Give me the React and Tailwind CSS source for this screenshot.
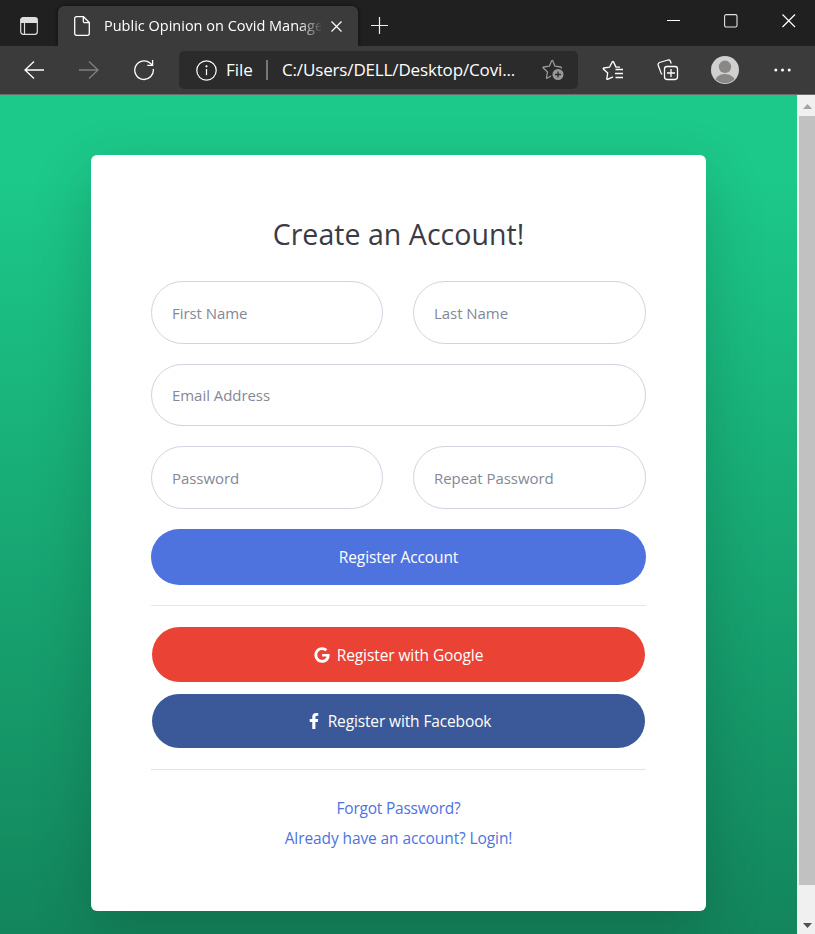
import React from "react";
import { FaGoogle, FaFacebookF } from "react-icons/fa";

const UI = "font-['Segoe_UI','Open_Sans','Noto_Sans',sans-serif]";

function Field({ placeholder, className }) {
  return (
    <input
      placeholder={placeholder}
      className={`block min-w-0 rounded-full border border-[#d1d3e2] bg-white px-5 text-[15px] tracking-[-0.05px] text-[#6e707e] outline-none placeholder:text-[#858796] ${className}`}
    />
  );
}

function TitleBar() {
  return (
    <div className="flex h-[46px] bg-[#202020]">
      <div className="flex w-[58px] items-center justify-center pt-[6px]">
        <svg width="18" height="18" viewBox="0 0 18 18" fill="none" stroke="#dedede" strokeWidth="1.2">
          <rect x="0.7" y="0.7" width="16.6" height="16.6" rx="2.6" />
          <path d="M1 3A2 2 0 0 1 3 1h12a2 2 0 0 1 2 2v2.4H1z" fill="#dedede" />
          <path d="M4.5 5v12" />
        </svg>
      </div>
      <div className="mt-[6px] flex h-10 w-[300px] items-center rounded-t-[6px] bg-[#3b3b3b] pl-4 shadow-[0_0_4px_rgba(0,0,0,0.6)] [clip-path:inset(-6px_-6px_0_-6px)]">
        <svg width="16" height="20" viewBox="0 0 16 20" fill="none" stroke="#fff" strokeWidth="1.3">
          <path d="M2.5.7h7L15.3 6.5v11a1.8 1.8 0 0 1-1.8 1.8h-11a1.8 1.8 0 0 1-1.8-1.8v-15A1.8 1.8 0 0 1 2.5.7z" />
          <path d="M9.3.9v4.3a1.5 1.5 0 0 0 1.5 1.5h4.3" />
        </svg>
        <div className="ml-[14px] w-[217px] whitespace-nowrap text-[14.5px] leading-5 text-white [mask-image:linear-gradient(90deg,#000_194px,transparent_219px)]">
          Public Opinion on Covid Manage
        </div>
        <svg className="ml-[10px] mt-px" width="11" height="11" viewBox="0 0 11 11" stroke="#fff" strokeWidth="1.2">
          <path d="M.5.5l10 10M10.5.5l-10 10" />
        </svg>
      </div>
      <svg className="ml-[13px] mt-[17px]" width="18" height="18" viewBox="0 0 18 18" stroke="#eee" strokeWidth="1.2">
        <path d="M8.5 0v17M0 8.5h17" />
      </svg>
      <div className="ml-auto flex pr-[19px] pt-[14px]">
        <svg width="13" height="14" viewBox="0 0 13 14" stroke="#fff">
          <path d="M0 6.5h13" />
        </svg>
        <svg className="ml-[44px]" width="14" height="14" viewBox="0 0 14 14" fill="none" stroke="#e3e3e3" strokeWidth="1.1">
          <rect x=".6" y=".6" width="12.4" height="12.4" rx="1.6" />
        </svg>
        <svg className="ml-[44px]" width="14" height="14" viewBox="0 0 14 14" stroke="#fff" strokeWidth="1.2">
          <path d="M.5.5l12.5 12.5M13 .5L.5 13" />
        </svg>
      </div>
    </div>
  );
}

function Toolbar() {
  return (
    <div className="flex h-[49px] items-center border-b border-[#6b6b6b] bg-[#3b3b3b]">
      <svg className="ml-[24px] shrink-0" width="20" height="18" viewBox="0 0 20 18" fill="none" stroke="#fff" strokeWidth="1.3">
        <path d="M10 .5L1 9l9 8.5M1 9h19" />
      </svg>
      <svg className="ml-[35px] shrink-0" width="20" height="18" viewBox="0 0 20 18" fill="none" stroke="#808080" strokeWidth="1.3">
        <path d="M10 .5L19 9l-9 8.5M19 9H0" />
      </svg>
      <svg className="ml-[34px] shrink-0" width="22" height="22" viewBox="0 0 22 22" fill="none" stroke="#fff" strokeWidth="1.3">
        <path d="M20.3 10A9.3 9.3 0 1 1 17 4L19.5 6.2" />
        <path d="M19.6 1v5.4h-5.3" />
      </svg>
      <div className="ml-[24px] flex h-[38px] w-[399px] shrink-0 items-center rounded-[5px] bg-[#2b2b2b]">
        <svg className="ml-[17px] shrink-0" width="21" height="21" viewBox="0 0 21 21" fill="none" stroke="#fff" strokeWidth="1.2">
          <circle cx="10.5" cy="10.5" r="9.7" />
          <path d="M10.5 9v6.2" />
          <circle cx="10.5" cy="6.3" r=".5" fill="#fff" />
        </svg>
        <span className="ml-[9px] w-[28px] whitespace-nowrap text-[17px] leading-6 text-white">File</span>
        <span className="ml-[12px] h-5 w-[2px] bg-[#777]" />
        <span className="ml-[14px] w-[236px] whitespace-nowrap text-[17px] leading-6 tracking-[-0.15px] text-white">C:/Users/DELL/Desktop/Covi...</span>
        <svg className="ml-[24px] shrink-0" width="22" height="22" viewBox="0 0 22 22" fill="none" stroke="#999" strokeWidth="1.3">
          <path d="M9 17L5 19.3Q4.2 19.5 4.5 18.5L5.5 13 1.2 9Q.7 8.2 1.7 8L7.3 7.2 9.7 1.7Q10.2 1 10.7 1.7L13 7.2 18.8 8Q19.8 8.3 19 9.3" strokeLinejoin="round" />
          <circle cx="16" cy="15.5" r="5.5" fill="#999" stroke="none" />
          <path d="M16 12.5v6M13 15.5h6" stroke="#2b2b2b" />
        </svg>
      </div>
      <svg className="ml-[24px] shrink-0" width="22" height="21" viewBox="0 0 22 21" fill="none" stroke="#fff" strokeWidth="1.3" strokeLinejoin="round">
        <path d="M11 16.8L5.5 19.4Q4.7 19.6 4.8 18.6L5.7 13 1.3 8.9Q.9 8.2 1.8 8L7.5 7.2 10.4 1.6Q10.9 1 11.4 1.6L14 7.1H18" />
        <path d="M13.5 10.5H21M13 14.5H21M13.5 18.5H21" transform="translate(0 -1)" />
      </svg>
      <svg className="ml-[33px] shrink-0" width="22" height="22" viewBox="0 0 22 22" fill="none" stroke="#fff" strokeWidth="1.3" strokeLinejoin="round">
        <rect x="7.5" y="7.5" width="13" height="13" rx="2.4" />
        <path d="M14 10v8M10 14h8" />
        <path d="M5.3 15.2Q4.3 15 3.9 13.6L1.2 6.2Q.7 4.3 2.5 3.5L11 1Q12.7.7 13.3 2L14.2 4.5" />
      </svg>
      <svg className="ml-[32px] shrink-0" width="28" height="28" viewBox="0 0 28 28">
        <defs>
          <clipPath id="avatar"><circle cx="14" cy="14" r="13.2" /></clipPath>
        </defs>
        <circle cx="14" cy="14" r="14" fill="#d2d0ce" />
        <circle cx="14" cy="10.8" r="6.2" fill="#8a8886" />
        <ellipse cx="14" cy="26" rx="10.5" ry="7.9" fill="#8a8886" clipPath="url(#avatar)" />
      </svg>
      <svg className="ml-[35px] shrink-0" width="17" height="4" viewBox="0 0 17 4" fill="#fff">
        <circle cx="1.8" cy="2" r="1.5" />
        <circle cx="8.5" cy="2" r="1.5" />
        <circle cx="15.2" cy="2" r="1.5" />
      </svg>
    </div>
  );
}

function RegisterCard() {
  return (
    <div className="mx-auto mt-[60px] h-[756px] w-[615px] rounded-[6px] bg-white px-[60px] pt-[60px] text-[15.5px] tracking-[-0.1px] shadow-[0_20px_60px_rgba(0,0,0,0.175)]">
      <h1 className="h-[66px] whitespace-nowrap text-center text-[28.5px] leading-[39px] tracking-[0.05px] text-[#3a3b45]">
        Create an Account!
      </h1>
      <div className="flex gap-[30px]">
        <Field placeholder="First Name" className="h-[63px] w-[232px]" />
        <Field placeholder="Last Name" className="h-[63px] w-[233px]" />
      </div>
      <Field placeholder="Email Address" className="mt-5 h-[62px] w-full" />
      <div className="mt-5 flex gap-[30px]">
        <Field placeholder="Password" className="h-[63px] w-[232px]" />
        <Field placeholder="Repeat Password" className="h-[63px] w-[233px]" />
      </div>
      <button className="mt-5 block h-[56px] w-full rounded-full bg-[#4e73df] pt-[2px] text-white">Register Account</button>
      <hr className="mt-5 border-[#e6e6e6]" />
      <button className="mx-px mt-[21px] flex h-[55px] w-[493px] items-center justify-center rounded-full bg-[#ea4335] text-white">
        <FaGoogle className="mr-[7px]" size={16} />
        <span className="pt-[2px]">Register with Google</span>
      </button>
      <button className="mx-px mt-3 flex h-[54px] w-[493px] items-center justify-center rounded-full bg-[#3b5998] tracking-[-0.13px] text-white">
        <FaFacebookF className="mr-[6px]" size={16} />
        <span className="pt-[2px]">Register with Facebook</span>
      </button>
      <hr className="mt-[21px] border-[#e3e3e3]" />
      <div className="mt-[23px] text-center leading-[30px] text-[#4e73df]">
        <a className="block tracking-[-0.22px]">Forgot Password?</a>
        <a className="block">Already have an account? Login!</a>
      </div>
    </div>
  );
}

function Scrollbar() {
  return (
    <div className="flex w-[18px] flex-col items-center bg-[#f0f0f0]">
      <svg className="ml-[3px] mt-[9px] shrink-0" width="9" height="5" viewBox="0 0 9 5" fill="#a3a3a3">
        <path d="M0 5L4.5 0 9 5z" />
      </svg>
      <div className="mt-[7px] h-[769px] w-[16px] shrink-0 self-end bg-[#c1c1c1]" />
      <svg className="ml-[2px] mt-[38px] shrink-0" width="9" height="5" viewBox="0 0 9 5" fill="#505050">
        <path d="M0 0h9L4.5 5z" />
      </svg>
    </div>
  );
}

export default function App() {
  return (
    <div className={`flex h-[934px] w-[815px] flex-col overflow-hidden ${UI}`}>
      <TitleBar />
      <Toolbar />
      <div className="flex h-[839px]">
        <div className="w-[797px] overflow-hidden bg-[linear-gradient(180deg,#1cc88a_10%,#13855c_100%)]">
          <RegisterCard />
        </div>
        <Scrollbar />
      </div>
    </div>
  );
}
